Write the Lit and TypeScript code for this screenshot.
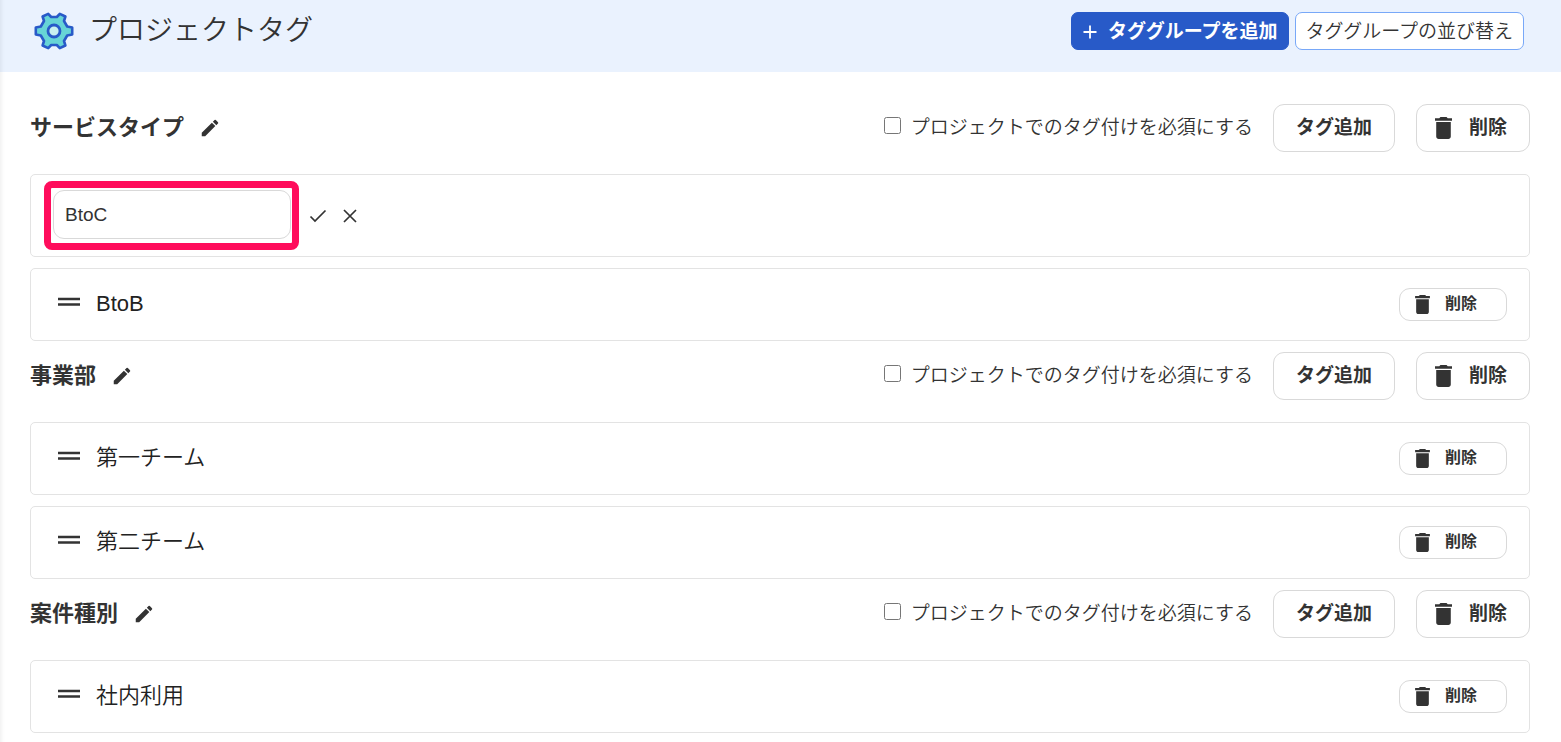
import { LitElement, html, css } from "lit";
import { customElement, property, state } from "lit/decorators.js";

const fontStack = css`"Liberation Sans", "Noto Sans CJK JP", sans-serif`;

interface Tag {
  name: string;
  editing?: boolean;
}

interface TagGroup {
  id: string;
  name: string;
  required: boolean;
  tags: Tag[];
}

const gearIcon = html`<svg class="gear" viewBox="0 0 40 38" aria-hidden="true">
  <path
    d="M14.2 1.800 17.200 5H22.800L25.800 1.800 31.400 4.500 30 9 33.200 14.500 38.200 15.500V22.500L33.200 23.500 30 29 31.400 33.500 25.800 36.200 22.800 33H17.200L14.200 36.200 8.600 33.500 10 29 6.800 23.500 1.800 22.500V15.500L6.800 14.500 10 9 8.600 4.500Z"
    fill="#67d4d6" stroke="#285ac8" stroke-width="2.600" stroke-linejoin="round" />
  <circle cx="20" cy="19" r="6" fill="#c9f0f0" stroke="#285ac8" stroke-width="2.800" />
</svg>`;

const pencilIcon = html`<svg class="pencil" viewBox="0 0 24 24" aria-hidden="true">
  <path fill="currentColor" d="M3 17.25V21h3.75L17.81 9.94l-3.75-3.75L3 17.25zM20.71 7.04a1 1 0 0 0 0-1.41l-2.34-2.34a1 1 0 0 0-1.41 0l-1.83 1.83 3.75 3.75 1.83-1.83z" />
</svg>`;

const trashIcon = html`<svg class="trash" viewBox="5 3 14 18" aria-hidden="true">
  <path fill="currentColor" d="M6 19c0 1.1.9 2 2 2h8c1.1 0 2-.9 2-2V7H6v12zM19 4h-3.500l-1-1h-5l-1 1H5v2h14V4z" />
</svg>`;

@customElement("tag-row")
export class TagRow extends LitElement {
  static styles = css`
    :host {
      display: block;
      font-family: ${fontStack};
    }
    .row {
      box-sizing: border-box;
      display: flex;
      align-items: center;
      min-height: 73px;
      padding: 0 22px 0 27px;
      border: 1px solid #e3e3e3;
      border-radius: 5px;
      background: #fff;
      color: #222;
    }
    .row.editing {
      min-height: 83px;
      padding-left: 13px;
    }
    button {
      font: inherit;
      color: #333;
      background: none;
      border: 0;
      padding: 0;
      cursor: pointer;
    }
    .handle {
      width: 22px;
      height: 10px;
      margin: 0 16px 6px 0;
      cursor: grab;
    }
    .handle svg {
      display: block;
      width: 22px;
      height: 10px;
    }
    .name {
      flex: 1;
      padding-bottom: 2px;
      font-size: 22px;
      line-height: 32px;
      font-weight: 350;
    }
    .delete {
      box-sizing: border-box;
      display: flex;
      align-items: center;
      width: 108px;
      height: 33px;
      padding: 0 0 0 15px;
      gap: 15px;
      border: 1px solid #d9d9d9;
      border-radius: 11px;
      font-size: 16px;
      line-height: 24px;
      font-weight: 700;
    }
    .delete .label {
      padding-bottom: 2px;
    }
    .trash {
      width: 15px;
      height: 19px;
    }
    .frame {
      padding: 2px 1px 4px 2px;
      border: 7px solid #ff0d5c;
      border-radius: 8px;
    }
    .edit {
      box-sizing: border-box;
      display: block;
      width: 238px;
      height: 49px;
      padding: 0 11px;
      border: 1px solid #d9d9d9;
      border-radius: 11px;
      background: #fff;
      color: #333;
      font: 19px/28px ${fontStack};
      outline: none;
    }
    .actions {
      display: flex;
      gap: 14px;
      margin-left: 10px;
    }
    .actions svg {
      display: block;
      width: 18px;
      height: 18px;
    }
  `;

  @property({ attribute: false }) tag!: Tag;

  render() {
    if (this.tag.editing) {
      return html`<div class="row editing">
        <div class="frame">
          <input class="edit" type="text" aria-label="タグ名" .value=${this.tag.name} />
        </div>
        <div class="actions">
          <button type="button" aria-label="保存">
            <svg viewBox="0 0 18 18" aria-hidden="true">
              <path d="M1.500 9.500 6 14 16.500 3.500" fill="none" stroke="currentColor" stroke-width="1.700" />
            </svg>
          </button>
          <button type="button" aria-label="キャンセル">
            <svg viewBox="0 0 18 18" aria-hidden="true">
              <path d="M3 3 15 15M15 3 3 15" fill="none" stroke="currentColor" stroke-width="1.700" />
            </svg>
          </button>
        </div>
      </div>`;
    }
    return html`<div class="row">
      <button class="handle" type="button" aria-label="並び替え">
        <svg viewBox="0 0 22 10" aria-hidden="true">
          <path d="M0 2H22M0 7.500H22" stroke="#333" stroke-width="2.500" />
        </svg>
      </button>
      <span class="name">${this.tag.name}</span>
      <button class="delete" type="button">${trashIcon}<span class="label">削除</span></button>
    </div>`;
  }
}

@customElement("tag-group")
export class TagGroupSection extends LitElement {
  static styles = css`
    :host {
      display: block;
      font-family: ${fontStack};
      color: #333;
    }
    .group {
      display: grid;
      gap: 11px;
    }
    .head {
      display: flex;
      align-items: center;
      min-height: 48px;
      margin-bottom: 11px;
    }
    .title {
      margin: 0 15px 0 0;
      font-size: 22px;
      line-height: 32px;
      font-weight: 700;
    }
    button {
      font: inherit;
      color: inherit;
      background: none;
      border: 0;
      padding: 0;
      cursor: pointer;
    }
    .pencil {
      display: block;
      width: 22px;
      height: 22px;
    }
    .required {
      display: flex;
      align-items: center;
      gap: 10px;
      margin: 0 20px 0 auto;
      font-size: 19px;
      line-height: 28px;
      font-weight: 350;
    }
    .check {
      width: 17px;
      height: 17px;
      margin: 0 0 6px;
    }
    .action {
      box-sizing: border-box;
      display: flex;
      align-items: center;
      height: 48px;
      padding: 0 22px;
      border: 1px solid #d9d9d9;
      border-radius: 11px;
      font-size: 19px;
      line-height: 28px;
      font-weight: 700;
      white-space: nowrap;
    }
    .action .label {
      padding-bottom: 1px;
    }
    .remove {
      width: 114px;
      margin-left: 21px;
      padding: 0 0 0 18px;
      gap: 17px;
    }
    .trash {
      width: 17px;
      height: 22px;
    }
  `;

  @property({ attribute: false }) group!: TagGroup;

  render() {
    const { id, name, required, tags } = this.group;
    return html`<section class="group" aria-labelledby="${id}-title">
      <div class="head">
        <h2 class="title" id="${id}-title">${name}</h2>
        <button type="button" aria-label="名前を編集">${pencilIcon}</button>
        <label class="required" for="${id}-required">
          <input class="check" id="${id}-required" type="checkbox" .checked=${required} />
          プロジェクトでのタグ付けを必須にする
        </label>
        <button class="action" type="button"><span class="label">タグ追加</span></button>
        <button class="action remove" type="button">${trashIcon}<span class="label">削除</span></button>
      </div>
      ${tags.map((tag) => html`<tag-row .tag=${tag}></tag-row>`)}
    </section>`;
  }
}

@customElement("app-root")
export class AppRoot extends LitElement {
  static styles = css`
    :host {
      display: block;
      color: #333;
      font-family: ${fontStack};
    }
    .page {
      min-height: 100vh;
      box-shadow: inset 5px 0 4px -4px rgba(0, 0, 0, 0.08);
    }
    .bar {
      box-sizing: border-box;
      display: flex;
      align-items: flex-start;
      min-height: 72px;
      padding: 12px 37px 0 34px;
      background: #eaf2fe;
      box-shadow: inset 5px 0 4px -4px rgba(0, 0, 0, 0.08);
    }
    .gear {
      width: 40px;
      height: 38px;
      margin-right: 15px;
    }
    .heading {
      flex: 1;
      margin: 0;
      font-size: 28px;
      line-height: 38px;
      font-weight: 350;
    }
    .tools {
      display: flex;
      gap: 6px;
    }
    .tool {
      box-sizing: border-box;
      display: flex;
      align-items: center;
      height: 38px;
      padding: 1px 10px 0;
      border: 1px solid #78a8f8;
      border-radius: 7px;
      background: #fff;
      color: #333;
      font-family: inherit;
      font-size: 19px;
      line-height: 28px;
      font-weight: 350;
      white-space: nowrap;
      cursor: pointer;
    }
    .tool.primary {
      gap: 10px;
      border-color: #285ac8;
      background: #285ac8;
      color: #fff;
      font-weight: 700;
    }
    .plus {
      width: 16px;
      height: 16px;
    }
    .groups {
      display: grid;
      gap: 11px;
      padding: 32px 31px 8px 30px;
    }
  `;

  @state() private groups: TagGroup[] = [
    {
      id: "service",
      name: "サービスタイプ",
      required: false,
      tags: [{ name: "BtoC", editing: true }, { name: "BtoB" }],
    },
    {
      id: "division",
      name: "事業部",
      required: false,
      tags: [{ name: "第一チーム" }, { name: "第二チーム" }],
    },
    {
      id: "matter",
      name: "案件種別",
      required: false,
      tags: [{ name: "社内利用" }],
    },
  ];

  render() {
    return html`<div class="page">
      <header class="bar">
        ${gearIcon}
        <h1 class="heading">プロジェクトタグ</h1>
        <div class="tools">
          <button class="tool primary" type="button">
            <svg class="plus" viewBox="0 0 16 16" aria-hidden="true">
              <path d="M8 1.500V14.500M1.500 8H14.500" stroke="currentColor" stroke-width="1.800" />
            </svg>
            タググループを追加
          </button>
          <button class="tool" type="button">タググループの並び替え</button>
        </div>
      </header>
      <main class="groups">
        ${this.groups.map((group) => html`<tag-group .group=${group}></tag-group>`)}
      </main>
    </div>`;
  }
}
